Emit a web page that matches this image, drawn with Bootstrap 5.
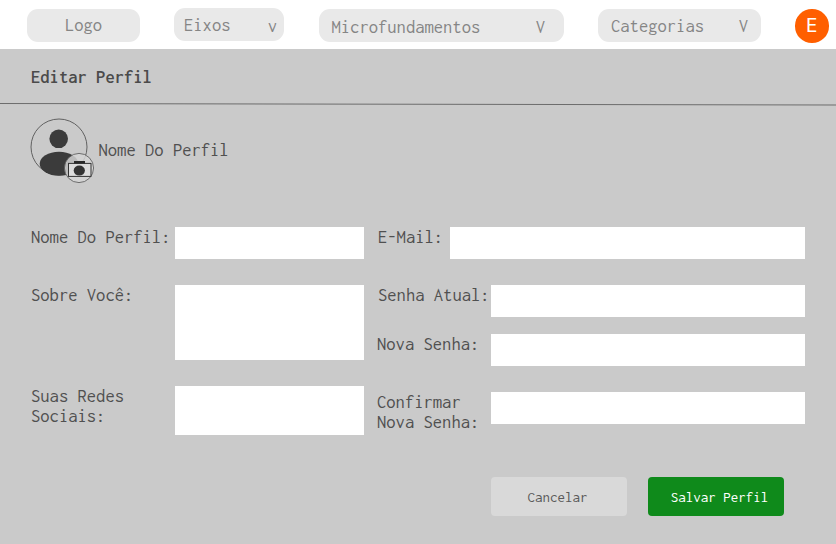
<!DOCTYPE html>
<html lang="pt-BR">
<head>
<meta charset="utf-8">
<meta name="viewport" content="width=device-width, initial-scale=1">
<title>Editar Perfil</title>
<link href="https://cdn.jsdelivr.net/npm/bootstrap@5.3.0/dist/css/bootstrap.min.css" rel="stylesheet">
<style>
body{background:#cacaca;color:#505050;font-family:Inconsolata,"DejaVu Sans Mono",monospace;font-size:18.6px;line-height:20px;height:544px;overflow:hidden}
.topbar{height:49px;padding:9px 7px 0 27px}
.pill{height:33px;border-radius:11px;background:#e9e9e9;color:#858585;line-height:33px;border:0}
.pill-logo{width:113px;margin-right:34px}
.pill-eixos{width:110px;margin:-1px 34.5px 0 0;padding:1px 7px 0 10px}
.pill-micro{width:245.5px;margin-right:34px;padding:2px 19px 0 13px}
.pill-cat{width:163px;margin-right:34px;padding:1px 13px 0 13px}
.chev-low{padding-top:1px}
.user-dot{width:33.5px;height:33.5px;background:#ff5f00;font:19px/34px Inter,sans-serif}
.title-row{height:54px;padding:18px 31px 0}
.title-row h1{font-size:18.6px;line-height:20px;color:#4b4b4b;font-weight:600}
.rule{height:3px}
.profile-row{padding:12px 0 0 30px;height:120.5px}
.profile-name{padding:22px 0 0 3.5px}
.edit-form{padding:0 31px;gap:14px}
.col-left{width:333px}
.col-right{width:427px}
.edit-form label{white-space:nowrap}
.edit-form .form-control{background:#fff;border:0;border-radius:0;padding:4px 8px;min-height:0;resize:none;flex:none}
.w-a{width:189px}.w-b{width:355.5px}.w-c{width:314px}
.h-line{height:32px}.h-about{height:75px}.h-social{height:49px}
.gap-row{margin-bottom:26px}.gap-sm{margin-bottom:17px}
.lbl-out{margin-left:-1px}
.actions{margin:42px 0 0 491px;gap:21px}
.actions .btn{width:136px;height:39px;border:0;border-radius:4px;font-size:15px;line-height:39px;padding:0}
.btn-cancel,.btn-cancel:hover{background:#d9d9d9;color:#5a5a5a}
.btn-save,.btn-save:hover{background:#0f8a1b;color:#fff}
.actions .btn-save{padding:1px 0 0 7px}
.actions .btn-cancel{padding:1px 3px 0 0}
</style>
</head>
<body>
<nav class="topbar d-flex align-items-start bg-white">
  <a class="pill pill-logo text-center text-decoration-none" href="#">Logo</a>
  <button class="pill pill-eixos d-flex justify-content-between"><span>Eixos</span><span class="chev-low">v</span></button>
  <button class="pill pill-micro d-flex justify-content-between"><span>Microfundamentos</span><span>V</span></button>
  <button class="pill pill-cat d-flex justify-content-between"><span>Categorias</span><span>V</span></button>
  <div class="user-dot rounded-circle text-white text-center">E</div>
</nav>
<header>
  <div class="title-row"><h1 class="m-0">Editar Perfil</h1></div>
  <svg class="rule d-block w-100" viewBox="0 0 836 3" preserveAspectRatio="none"><path d="M0 .5L836 2" stroke="#6c6c6c" fill="none"/></svg>
</header>
<main>
  <section class="profile-row d-flex align-items-start">
    <svg width="65" height="66" viewBox="30 118 65 66" fill="none">
      <circle cx="59" cy="147" r="28" stroke="#555" stroke-width=".9"/>
      <circle cx="58.700" cy="138.800" r="9.300" fill="#3b3b3b"/>
      <ellipse cx="59" cy="163.800" rx="19.300" ry="12" fill="#3b3b3b"/>
      <circle cx="79" cy="168" r="14.600" fill="#d4d4d4" fill-opacity=".84" stroke="#555" stroke-width=".8"/>
      <rect x="68.500" y="163.400" width="22.500" height="13" fill="#dcdcdc" stroke="#333"/>
      <path d="M74 161h11v2.500H74z" fill="#292929"/>
      <ellipse cx="79.300" cy="170.600" rx="5.600" ry="5" fill="#333"/>
    </svg>
    <span class="profile-name">Nome Do Perfil</span>
  </section>
  <form class="edit-form d-flex">
    <div class="col-left">
      <div class="d-flex justify-content-between gap-row"><label for="nome">Nome Do Perfil:</label><input id="nome" class="form-control w-a h-line"></div>
      <div class="d-flex justify-content-between gap-row"><label for="sobre">Sobre Você:</label><textarea id="sobre" class="form-control w-a h-about"></textarea></div>
      <div class="d-flex justify-content-between"><label for="redes">Suas Redes<br>Sociais:</label><textarea id="redes" class="form-control w-a h-social"></textarea></div>
    </div>
    <div class="col-right">
      <div class="d-flex justify-content-between gap-row"><label for="email">E-Mail:</label><input id="email" type="email" class="form-control w-b h-line"></div>
      <div class="d-flex justify-content-between gap-sm"><label for="atual">Senha Atual:</label><input id="atual" type="password" class="form-control w-c h-line"></div>
      <div class="d-flex justify-content-between gap-row"><label class="lbl-out" for="nova">Nova Senha:</label><input id="nova" type="password" class="form-control w-c h-line"></div>
      <div class="d-flex justify-content-between"><label class="lbl-out" for="conf">Confirmar<br>Nova Senha:</label><input id="conf" type="password" class="form-control w-c h-line"></div>
    </div>
  </form>
  <div class="actions d-flex">
    <button class="btn btn-cancel">Cancelar</button>
    <button class="btn btn-save">Salvar Perfil</button>
  </div>
</main>
<script src="https://cdn.jsdelivr.net/npm/bootstrap@5.3.0/dist/js/bootstrap.bundle.min.js"></script>
</body>
</html>
